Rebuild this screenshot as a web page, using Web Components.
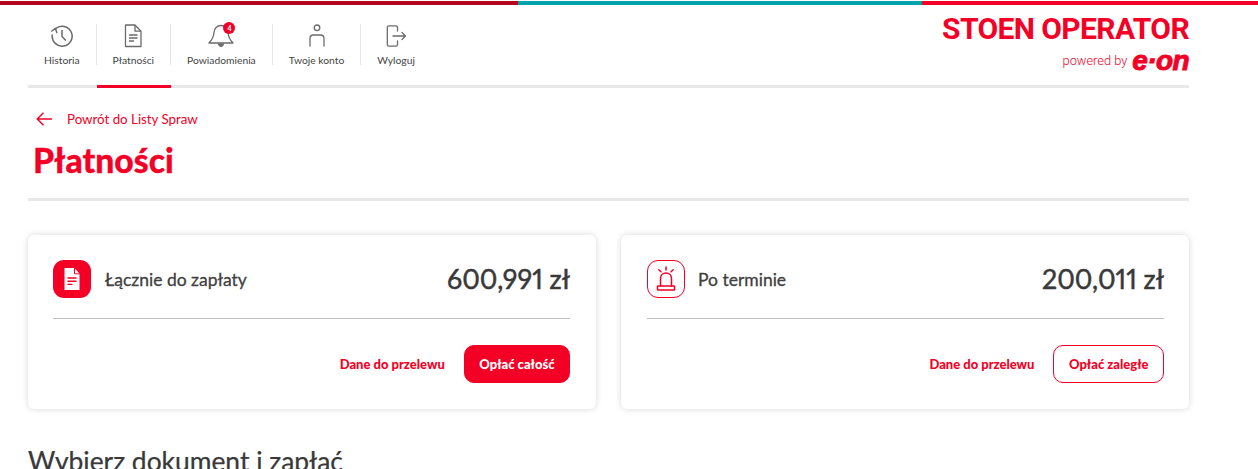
<!DOCTYPE html>
<html lang="pl">
<head>
<meta charset="utf-8">
<title>Płatności</title>
<style>
  html, body { margin: 0; height: 100%; overflow: hidden; background: #fff; }
  body { font-family: "Lato", "Liberation Sans", sans-serif; color: #39393a; }
</style>
</head>
<body>
<x-strip></x-strip>
<x-page>
  <x-header>
    <x-nav-item label="Historia" icon="history"></x-nav-item>
    <x-nav-item label="Płatności" icon="doc" active></x-nav-item>
    <x-nav-item label="Powiadomienia" icon="bell" badge="4"></x-nav-item>
    <x-nav-item label="Twoje konto" icon="user"></x-nav-item>
    <x-nav-item label="Wyloguj" icon="logout" last></x-nav-item>
  </x-header>
  <x-title-block back="Powrót do Listy Spraw">Płatności</x-title-block>
  <x-cards>
    <x-card label="Łącznie do zapłaty" amount="600,991 zł" icon="doc" action="Opłać całość" solid></x-card>
    <x-card label="Po terminie" amount="200,011 zł" icon="alarm" action="Opłać zaległe"></x-card>
  </x-cards>
  <x-section-title>Wybierz dokument i zapłać</x-section-title>
</x-page>

<script>
const ICONS = {
  history: `<svg width="24" height="24" viewBox="0 0 24 24" fill="none" stroke="#6b6b6b" stroke-width="1.5" stroke-linecap="round" stroke-linejoin="round"><path d="M5.600 4.600A10 10 0 1 1 2.200 11"/><path d="M1.800 7l3.600-2.600L6.800 8.400"/><path d="M12 6.500v6l3.400 3.600"/></svg>`,
  doc: `<svg width="24" height="24" viewBox="0 0 24 24" fill="none" stroke="#6b6b6b" stroke-width="1.300" stroke-linejoin="round"><path d="M4.500 1h9.500l6 6.200v15.300h-15.500z"/><path d="M14 1v6.200h6"/><path d="M8 11h8.500M8 14h8.500M8 17h5"/></svg>`,
  bell: `<svg width="26" height="24" viewBox="0 0 26 24" fill="none" stroke="#6b6b6b" stroke-width="1.300" stroke-linejoin="round"><path d="M13 1.500c-4 0-6.800 3-7 7-.2 4-1.700 7-5 10.500h24c-3.300-3.500-4.800-6.500-5-10.500-.2-4-3-7-7-7z"/><path d="M10.500 19.500c.3 1.800 1.300 2.800 2.500 2.800s2.200-1 2.500-2.800" fill="#6b6b6b"/></svg>`,
  user: `<svg width="24" height="24" viewBox="0 0 24 24" fill="none" stroke="#6b6b6b" stroke-width="1.300"><circle cx="12" cy="3.800" r="2.800"/><path d="M5 22v-7.500c0-2.200 1.500-3.500 3.500-3.500h7c2 0 3.500 1.300 3.500 3.500V22" stroke-linecap="round"/></svg>`,
  logout: `<svg width="24" height="24" viewBox="0 0 24 24" fill="none" stroke="#6b6b6b" stroke-width="1.300" stroke-linecap="round" stroke-linejoin="round"><path d="M13.500 7V3.500c0-1-.7-1.700-1.700-1.700H5c-1 0-1.700.7-1.700 1.700v17c0 1 .7 1.700 1.700 1.700h6.800c1 0 1.700-.7 1.700-1.700V17"/><path d="M9 12h12.500M18 8.500l3.500 3.500-3.500 3.500"/></svg>`,
  alarm: `<svg width="24" height="26" viewBox="0 0 24 26" fill="none" stroke="#f40026" stroke-width="1.500" stroke-linecap="round" stroke-linejoin="round"><path d="M12 1v3M4.800 3.800l2.200 2M19.200 3.800l-2.200 2"/><path d="M6.500 20v-7.500c0-3.300 2.300-5.500 5.500-5.500s5.500 2.200 5.500 5.500V20"/><rect x="3.500" y="20" width="17" height="4" rx=".6"/></svg>`,
  docWhite: `<svg width="20" height="24" viewBox="0 0 20 24"><path d="M2.500 1h10L17.500 6.800V23H2.500z" fill="#fff"/><path d="M12.500 1v5.800h5" fill="none" stroke="#f40026" stroke-width="1"/><path d="M5.500 11h9M5.500 14.200h9M5.500 17.400h5" stroke="#f40026" stroke-width="1.400"/></svg>`
};

class XStrip extends HTMLElement {
  constructor() {
    super();
    this.attachShadow({ mode: "open" }).innerHTML = `
      <style>
        :host { display: flex; height: 4px; margin-top: 1px; }
        i { display: block; }
        .a { width: 518px; background: #b5051f; }
        .b { width: 404px; background: #00a3ad; }
        .c { flex: 1; background: #f40026; }
      </style>
      <i class="a"></i><i class="b"></i><i class="c"></i>`;
  }
}

class XPage extends HTMLElement {
  constructor() {
    super();
    this.attachShadow({ mode: "open" }).innerHTML = `
      <style>:host { display: block; width: 1161px; margin-left: 28px; }</style>
      <slot></slot>`;
  }
}

class XHeader extends HTMLElement {
  constructor() {
    super();
    this.attachShadow({ mode: "open" }).innerHTML = `
      <style>
        :host { display: flex; justify-content: space-between; height: 80px; border-bottom: 3px solid #e8e8e8; box-sizing: content-box; }
        nav { display: flex; height: 80px; }
        .brand { display: flex; flex-direction: column; align-items: flex-end; padding-top: 6px; color: #f40026; }
        .name { font: 700 30px/36px "Roboto", "Liberation Sans", sans-serif; letter-spacing: -.6px; white-space: nowrap; }
        .by { display: flex; align-items: center; gap: 5px; margin-top: 4px; height: 20px; }
        .by span { font: 300 12.800px/20px "Roboto", sans-serif; }
        .by b { font: italic 700 28px/20px "Liberation Sans", sans-serif; -webkit-text-stroke: 1px #f40026; letter-spacing: -.6px; }
      </style>
      <nav><slot></slot></nav>
      <div class="brand">
        <div class="name">STOEN OPERATOR</div>
        <div class="by"><span>powered by</span><b>e·on</b></div>
      </div>`;
  }
}

class XNavItem extends HTMLElement {
  constructor() {
    super();
    const badge = this.getAttribute("badge");
    this.attachShadow({ mode: "open" }).innerHTML = `
      <style>
        :host { display: block; position: relative; height: 83px; }
        :host([active])::after { content: ""; position: absolute; left: 0; right: 0; bottom: 0; height: 3px; background: #f40026; }
        .box { display: flex; flex-direction: column; align-items: center; box-sizing: border-box; height: 41px; margin-top: 19px; padding: 0 16px; border-right: 1px solid #e4e4e4; }
        :host([last]) .box { border-right: 0; }
        .ic { position: relative; height: 24px; }
        .badge { position: absolute; top: -2px; right: -1px; width: 12px; height: 12px; border-radius: 50%; background: #f40026; color: #fff; font: 700 7px/12px "Lato", sans-serif; text-align: center; }
        .label { margin-top: 5px; font-size: 10.300px; line-height: 14px; color: #444; white-space: nowrap; }
      </style>
      <div class="box">
        <div class="ic">${ICONS[this.getAttribute("icon")]}${badge ? `<span class="badge">${badge}</span>` : ""}</div>
        <div class="label">${this.getAttribute("label")}</div>
      </div>`;
  }
}

class XTitleBlock extends HTMLElement {
  constructor() {
    super();
    this.attachShadow({ mode: "open" }).innerHTML = `
      <style>
        :host { display: block; height: 110px; border-bottom: 3px solid #e8e8e8; color: #f40026; padding-left: 5px; }
        .back { display: flex; align-items: center; gap: 15px; padding: 20px 0 0 3px; height: 22px; font-size: 13.300px; line-height: 22px; }
        h1 { margin: 8px 0 0; font: 900 33.700px/44px "Lato", sans-serif; -webkit-text-stroke: .3px #f40026; }
      </style>
      <div class="back">
        <svg width="16" height="14" viewBox="0 0 16 14" fill="none" stroke="#f40026" stroke-width="1.400"><path d="M16 7H1M7.500.8L1.200 7l6.300 6.200"/></svg>
        <span>${this.getAttribute("back")}</span>
      </div>
      <h1><slot></slot></h1>`;
  }
}

class XCards extends HTMLElement {
  constructor() {
    super();
    this.attachShadow({ mode: "open" }).innerHTML = `
      <style>:host { display: grid; grid-template-columns: 568px 568px; gap: 25px; margin-top: 34px; }</style>
      <slot></slot>`;
  }
}

class XCard extends HTMLElement {
  constructor() {
    super();
    const solid = this.hasAttribute("solid");
    this.attachShadow({ mode: "open" }).innerHTML = `
      <style>
        :host { display: block; box-sizing: border-box; height: 174px; padding: 25px 26px 0 25px; border-radius: 6px; background: #fff; box-shadow: 0 0 6px rgba(0,0,0,.16); }
        :host(:last-child) { padding: 25px 25px 0 26px; }
        .top { display: flex; align-items: center; height: 38px; padding-bottom: 20px; border-bottom: 1px solid #bdbdbd; }
        .badge { display: flex; align-items: center; justify-content: center; box-sizing: border-box; width: 38px; height: 38px; border-radius: 11px; margin-right: 14px; flex: none; }
        .badge.solid { background: #f40026; }
        .badge.line { border: 1.800px solid #f40026; margin-right: 13px; }
        .label { flex: 1; font-size: 17.500px; font-weight: 400; -webkit-text-stroke: .3px #404040; color: #404040; }
        .amount { font-size: 26.800px; font-weight: 400; font-variant-numeric: proportional-nums; -webkit-text-stroke: .5px #39393a; color: #39393a; }
        .bottom { display: flex; justify-content: flex-end; align-items: center; gap: 19px; margin-top: 26px; }
        .link { font-size: 13px; font-weight: 900; color: #f40026; }
        button { box-sizing: border-box; height: 38px; padding: 0 14.500px; border-radius: 10px; border: 1.800px solid #f40026; font: 900 13px "Lato", sans-serif; background: #fff; color: #f40026; }
        button.solid { background: #f40026; color: #fff; }
      </style>
      <div class="top">
        <span class="badge ${solid ? "solid" : "line"}">${solid ? ICONS.docWhite : ICONS[this.getAttribute("icon")]}</span>
        <span class="label">${this.getAttribute("label")}</span>
        <span class="amount">${this.getAttribute("amount")}</span>
      </div>
      <div class="bottom">
        <span class="link">Dane do przelewu</span>
        <button class="${solid ? "solid" : ""}">${this.getAttribute("action")}</button>
      </div>`;
  }
}

class XSectionTitle extends HTMLElement {
  constructor() {
    super();
    this.attachShadow({ mode: "open" }).innerHTML = `
      <style>:host { display: block; margin-top: 35px; font-size: 26.400px; font-weight: 400; -webkit-text-stroke: .25px #39393a; line-height: 34px; color: #39393a; }</style>
      <slot></slot>`;
  }
}

customElements.define("x-strip", XStrip);
customElements.define("x-page", XPage);
customElements.define("x-header", XHeader);
customElements.define("x-nav-item", XNavItem);
customElements.define("x-title-block", XTitleBlock);
customElements.define("x-cards", XCards);
customElements.define("x-card", XCard);
customElements.define("x-section-title", XSectionTitle);
</script>
</body>
</html>
